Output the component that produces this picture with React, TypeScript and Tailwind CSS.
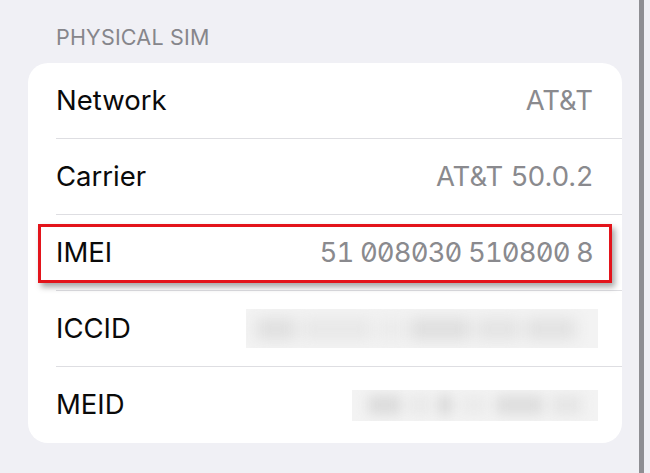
import React from 'react';

const rows = [
  { label: 'Network', value: 'AT&T' },
  { label: 'Carrier', value: 'AT&T 50.0.2' },
  { label: 'IMEI', value: '51 008030 510800 8', mono: true },
  { label: 'ICCID', blur: 'wide' },
  { label: 'MEID', blur: 'short' },
];

const Blurred = ({ kind }: { kind: string }) => {
  if (kind === 'wide') {
    return (
      <div className="w-[352px] h-[39px] -mr-[5px] overflow-hidden bg-[#f3f3f3]">
        <div className="flex h-full items-center gap-[6px] px-[10px] blur-[7px]">
          <div className="h-[22px] w-[40px] bg-[#e0e0e0]" />
          <div className="h-[22px] w-[70px] bg-[#e8e8e8]" />
          <div className="h-[22px] w-[26px] bg-[#ebebeb]" />
          <div className="h-[22px] w-[60px] bg-[#dfdfdf]" />
          <div className="h-[22px] w-[44px] bg-[#e4e4e4]" />
          <div className="h-[22px] w-[50px] bg-[#e2e2e2]" />
        </div>
      </div>
    );
  }
  return (
    <div className="w-[246px] h-[31px] -mr-[5px] overflow-hidden bg-[#f3f3f3]">
      <div className="flex h-full items-center gap-[8px] px-[16px] blur-[6px]">
        <div className="h-[20px] w-[36px] bg-[#dcdcdc]" />
        <div className="h-[20px] w-[22px] bg-[#e9e9e9]" />
        <div className="h-[20px] w-[16px] bg-[#dadada]" />
        <div className="h-[20px] w-[30px] bg-[#ebebeb]" />
        <div className="h-[20px] w-[50px] bg-[#dedede]" />
        <div className="h-[20px] w-[34px] bg-[#e6e6e6]" />
      </div>
    </div>
  );
};

export default function App() {
  return (
    <div
      className="flex w-[650px] h-[473px] overflow-hidden bg-[#f0f0f5]"
      style={{ fontFamily: 'Inter, "Liberation Sans", sans-serif' }}
    >
      <div className="w-[639px] pl-[28px] pr-[17px] pt-[25px]">
        <div className="pl-[28px] text-[21.5px] leading-[25px] text-[#86868b] tracking-[0.2px]">
          PHYSICAL SIM
        </div>
        <div className="relative mt-[13px] rounded-[20px] bg-white">
          {rows.map((r, i) => (
            <div key={r.label} className="pl-[28px]">
              <div
                className={`flex h-[76px] items-center justify-between pr-[29px] ${
                  i < rows.length - 1 ? 'border-b border-[#dedee2]' : ''
                }`}
              >
                <span className="text-[27.5px] text-[#0a0a0a]">{r.label}</span>
                {r.value && (
                  <span
                    className={`text-[27.5px] text-[#8a8a8e] ${
                      r.mono ? 'tabular-nums slashed-zero tracking-[-0.9px]' : ''
                    }`}
                  >
                    {r.value}
                  </span>
                )}
                {r.blur && <Blurred kind={r.blur} />}
              </div>
            </div>
          ))}
          <div className="absolute left-[10px] right-[10px] top-[161px] h-[59px] border-[3px] border-[#e3141b] shadow-[3px_4px_6px_rgba(0,0,0,0.35)]" />
        </div>
      </div>
      <div className="w-[5px] h-full bg-[#8e8e93]" />
      <div className="flex-1 h-full bg-[#f0f0f5]" />
    </div>
  );
}
